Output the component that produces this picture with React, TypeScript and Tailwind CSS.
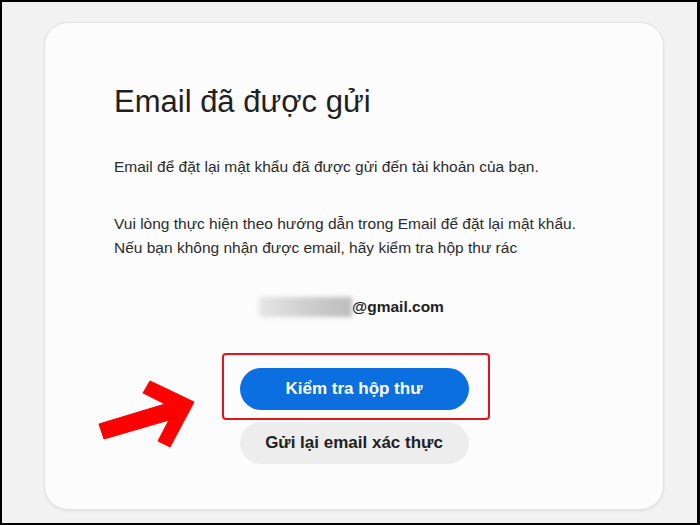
export default function App() {
  return (
    <div className="relative w-[700px] h-[525px] overflow-hidden bg-[#f2f2f2] border-black border-t-2 border-l-2 border-r-[3px] border-b-2 font-['Liberation_Sans',Arial,sans-serif]">
      {/* card */}
      <div className="ml-[42px] mt-[20px] w-[620px] h-[488px] rounded-3xl bg-[#fcfcfc] border border-[#e2e2e2] shadow-[0_1px_3px_rgba(0,0,0,0.08)] pl-[69px] pr-[60px] pt-[60px]">
        <h1 className="text-[31px] leading-[38px] text-[#1f1f1f] font-normal">Email đã được gửi</h1>

        <p className="mt-[34px] text-[15.5px] leading-[24px] text-[#2b2b2b]">
          Email để đặt lại mật khẩu đã được gửi đến tài khoản của bạn.
        </p>

        <p className="mt-[33px] text-[15.5px] leading-[24px] text-[#2b2b2b]">
          Vui lòng thực hiện theo hướng dẫn trong Email để đặt lại mật khẩu.
          <br />
          Nếu bạn không nhận được email, hãy kiểm tra hộp thư rác
        </p>

        <div className="mt-[35px] flex items-center justify-center text-[15.5px] leading-[24px] font-bold text-[#222] pr-[14px]">
          <span className="inline-block w-[93px] h-[20px] blur-[2px] bg-gradient-to-r from-[#e6e6e6] via-[#cfcfcf] to-[#bdbdbd]" />
          <span>@gmail.com</span>
        </div>

        <div className="mt-[49px] flex flex-col items-center gap-3 pr-[9px]">
          <div className="relative">
            <button className="w-[229px] h-[42px] rounded-full bg-[#0b6fdf] text-white text-[17px] font-bold">
              Kiểm tra hộp thư
            </button>
            <div className="absolute -left-[18px] -right-[21px] -top-[15px] -bottom-[10px] border-2 border-[#e3141c] rounded-[4px]" />
          </div>
          <button className="w-[229px] h-[42px] rounded-full bg-[#ededed] text-[#222] text-[17px] font-bold">
            Gửi lại email xác thực
          </button>
        </div>
      </div>

      {/* red arrow annotation */}
      <svg
        className="absolute left-[95px] top-[377px]"
        width="102"
        height="72"
        viewBox="97 379 102 72"
      >
        <polygon
          points="99,424 165,404 143,393 150,381 194,402 170,447 158,441 169,420 104,439"
          fill="#ff0000"
          stroke="#ff0000"
          strokeWidth="1"
          strokeLinejoin="round"
        />
      </svg>
    </div>
  );
}
